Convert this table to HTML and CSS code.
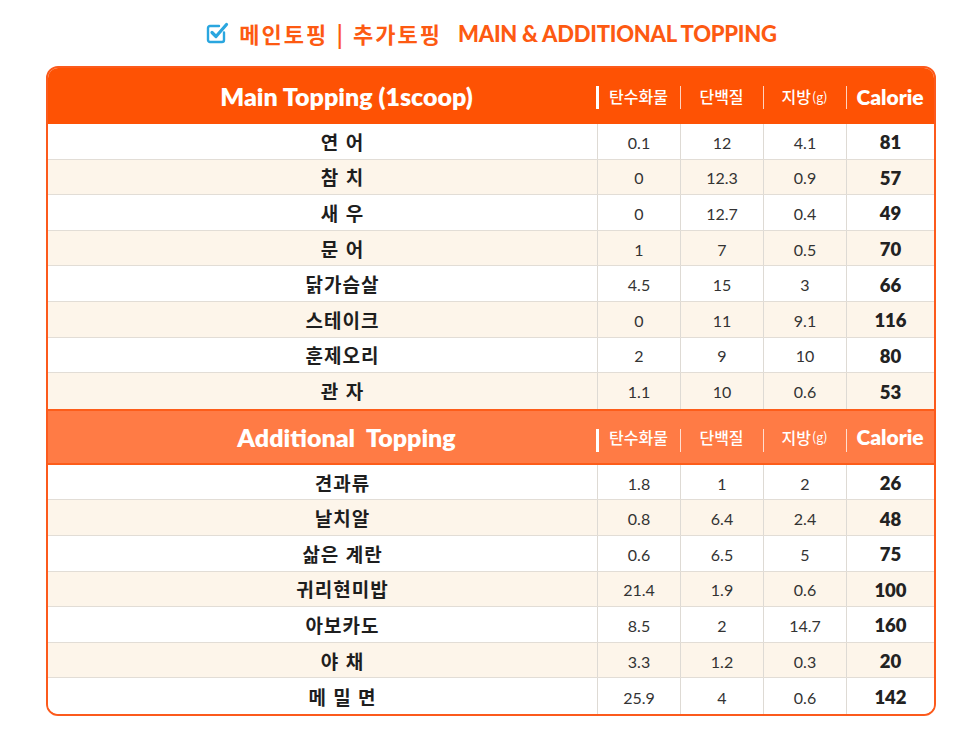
FILE: index.html
```html
<!DOCTYPE html>
<html lang="ko">
<head>
<meta charset="utf-8">
<link rel="stylesheet" href="styles.css">
</head>
<body>
<div class="page">
  <h1 class="title">
    <svg class="check" width="24" height="24" viewBox="0 0 24 24"><path d="M19 11.5V19a2 2 0 0 1-2 2H5a2 2 0 0 1-2-2V7a2 2 0 0 1 2-2h9" fill="none" stroke="#2aa6df" stroke-width="2.4" stroke-linecap="round"/><path d="M7 11.5l4 4L21.5 3.5" fill="none" stroke="#2aa6df" stroke-width="3.2" stroke-linecap="round" stroke-linejoin="round"/></svg>
    <span class="ko">메인토핑 | 추가토핑</span>
    <span class="en">MAIN &amp; ADDITIONAL TOPPING</span>
  </h1>
  <div class="table">
    <div class="row head main">
      <div class="c name htitle">Main Topping (1scoop)</div>
      <div class="c hl first">탄수화물</div>
      <div class="c hl">단백질</div>
      <div class="c hl">지방<small>(g)</small></div>
      <div class="c hl cal">Calorie</div>
    </div>
    <div class="row"><div class="c name">연 어</div><div class="c">0.1</div><div class="c">12</div><div class="c">4.1</div><div class="c kcal">81</div></div>
    <div class="row alt"><div class="c name">참 치</div><div class="c">0</div><div class="c">12.3</div><div class="c">0.9</div><div class="c kcal">57</div></div>
    <div class="row"><div class="c name">새 우</div><div class="c">0</div><div class="c">12.7</div><div class="c">0.4</div><div class="c kcal">49</div></div>
    <div class="row alt"><div class="c name">문 어</div><div class="c">1</div><div class="c">7</div><div class="c">0.5</div><div class="c kcal">70</div></div>
    <div class="row"><div class="c name">닭가슴살</div><div class="c">4.5</div><div class="c">15</div><div class="c">3</div><div class="c kcal">66</div></div>
    <div class="row alt"><div class="c name">스테이크</div><div class="c">0</div><div class="c">11</div><div class="c">9.1</div><div class="c kcal">116</div></div>
    <div class="row"><div class="c name">훈제오리</div><div class="c">2</div><div class="c">9</div><div class="c">10</div><div class="c kcal">80</div></div>
    <div class="row alt last"><div class="c name">관 자</div><div class="c">1.1</div><div class="c">10</div><div class="c">0.6</div><div class="c kcal">53</div></div>
    <div class="row head add">
      <div class="c name htitle">Additional&nbsp; Topping</div>
      <div class="c hl first">탄수화물</div>
      <div class="c hl">단백질</div>
      <div class="c hl">지방<small>(g)</small></div>
      <div class="c hl cal">Calorie</div>
    </div>
    <div class="row"><div class="c name">견과류</div><div class="c">1.8</div><div class="c">1</div><div class="c">2</div><div class="c kcal">26</div></div>
    <div class="row alt"><div class="c name">날치알</div><div class="c">0.8</div><div class="c">6.4</div><div class="c">2.4</div><div class="c kcal">48</div></div>
    <div class="row"><div class="c name">삶은 계란</div><div class="c">0.6</div><div class="c">6.5</div><div class="c">5</div><div class="c kcal">75</div></div>
    <div class="row alt"><div class="c name">귀리현미밥</div><div class="c">21.4</div><div class="c">1.9</div><div class="c">0.6</div><div class="c kcal">100</div></div>
    <div class="row"><div class="c name">아보카도</div><div class="c">8.5</div><div class="c">2</div><div class="c">14.7</div><div class="c kcal">160</div></div>
    <div class="row alt"><div class="c name">야 채</div><div class="c">3.3</div><div class="c">1.2</div><div class="c">0.3</div><div class="c kcal">20</div></div>
    <div class="row last"><div class="c name">메 밀 면</div><div class="c">25.9</div><div class="c">4</div><div class="c">0.6</div><div class="c kcal">142</div></div>
  </div>
</div>
</body>
</html>
```

FILE: styles.css
```css
* { box-sizing: border-box; }
html, body { margin: 0; padding: 0; background: #fff; }
body {
  font-family: "Lato", "Noto Sans CJK KR", sans-serif;
  color: #222;
}
.page {
  width: 966px;
  padding-top: 17px;
}
.title {
  margin: 0 0 17px 0;
  height: 32px;
  display: flex;
  align-items: center;
  justify-content: center;
  font-weight: 700;
  color: #fd5a12;
  padding-left: 16px;
}
.check { margin-right: 10px; }
.title .ko {
  font-family: "Noto Sans CJK KR", sans-serif;
  font-weight: 700;
  font-size: 22px;
  letter-spacing: 2px;
  margin-right: 16px;
}
.title .en {
  font-family: "Lato", sans-serif;
  font-weight: 900;
  font-size: 22px;
  letter-spacing: -0.25px;
}
.table {
  margin-left: 46px;
  width: 890px;
  border: 2px solid #fc5a1c;
  border-radius: 12px;
  overflow: hidden;
}
.row {
  display: grid;
  grid-template-columns: 549px 83px 83px 83px 88px;
  height: 35.6px;
  border-bottom: 1px solid #e2ddd6;
  background: #fff;
}
.row.alt { background: #fdf5ea; }
.row.last { border-bottom: none; }
.c {
  display: flex;
  align-items: center;
  justify-content: center;
  border-left: 1px solid #dedad4;
  font-size: 16px;
  color: #333;
  padding-top: 2px;
}
.c.name {
  border-left: none;
  font-family: "Noto Sans CJK KR", sans-serif;
  font-weight: 700;
  font-size: 19px;
  color: #1e1e1e;
  letter-spacing: 1px;
  padding-top: 0;
  padding-left: 40px;
}
.c.kcal {
  font-weight: 800;
  font-size: 18.5px;
  color: #222;
}
.row.head {
  height: 56px;
  border-bottom: none;
  color: #fff;
}
.row.head.main { background: #fe5204; }
.row.head.add {
  background: #ff7b45;
  border-top: 2px solid #fd5d1a;
  border-bottom: 2px solid #fd5d1a;
}
.htitle {
  color: #fff !important;
  font-family: "Lato", "Noto Sans CJK KR", sans-serif !important;
  font-weight: 800 !important;
  font-size: 25px !important;
  letter-spacing: 0 !important;
  padding-left: 48px !important;
}
.hl {
  border-left: none;
  position: relative;
  color: #fff;
  font-family: "Noto Sans CJK KR", sans-serif;
  font-weight: 500;
  font-size: 16px;
  padding-top: 0;
}
.hl::before {
  content: "";
  position: absolute;
  left: 0;
  top: 18px;
  height: 23px;
  width: 1px;
  background: rgba(255,255,255,0.75);
}
.hl.first::before { width: 3px; left: -1px; background: #fff; }
.hl small { font-size: 12.5px; font-weight: 400; margin-left: 1px; }
.hl.cal {
  font-family: "Lato", sans-serif;
  font-weight: 800;
  font-size: 21px;
}
```
